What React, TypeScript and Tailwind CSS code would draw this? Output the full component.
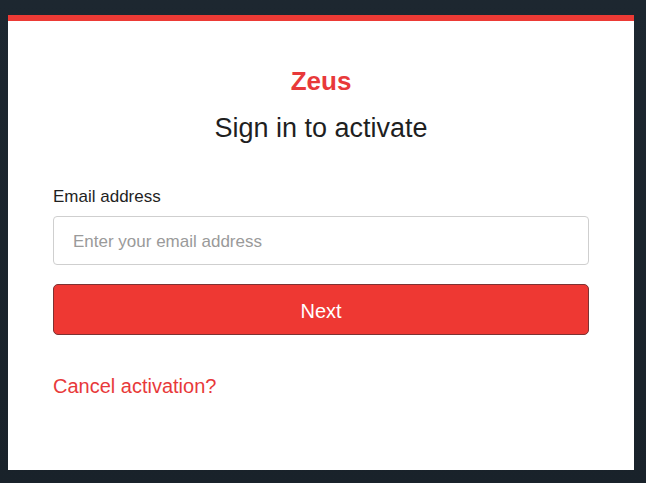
export default function App() {
  return (
    <div
      className="w-[646px] h-[483px] overflow-hidden bg-[#1b242d] bg-gradient-to-b from-[#1d2730] to-[#19222a] pt-[15px] pl-[8px]"
      style={{ fontFamily: '"Liberation Sans", Arial, sans-serif' }}
    >
      <div className="w-[626px] h-[455px] bg-white border-t-[6px] border-[#ec3a35] px-[45px] flex flex-col">
        <div className="mt-[44px] text-center text-[26px] leading-[32px] font-bold text-[#e8393a]">Zeus</div>
        <div className="mt-[13px] text-center text-[27px] leading-[36px] text-[#1f1f1f]">Sign in to activate</div>
        <label className="mt-[39px] text-[17px] leading-[24px] text-[#1f1f1f]">Email address</label>
        <input
          type="email"
          placeholder="Enter your email address"
          className="mt-[7px] h-[49px] w-full rounded-[4px] border border-[#cfcfcf] px-[19px] pt-[2px] text-[17px] text-[#222] placeholder:text-[#9a9a9a] outline-none"
        />
        <button className="mt-[19px] h-[51px] w-full rounded-[5px] border border-[#7d3232] bg-[#ee3833] pt-[2px] text-[20px] text-white">
          Next
        </button>
        <a className="mt-[37px] text-[20px] leading-[28px] text-[#e8393a]">Cancel activation?</a>
      </div>
    </div>
  );
}
